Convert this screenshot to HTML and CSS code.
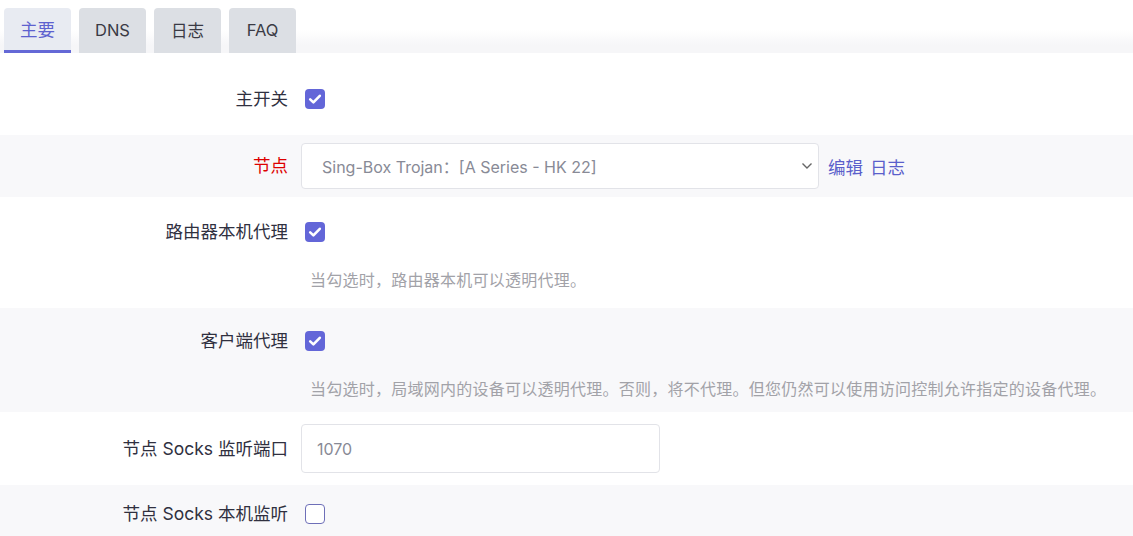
FILE: index.html
```html
<!DOCTYPE html>
<html lang="zh-CN">
<head>
  <meta charset="UTF-8">
  <title>PassWall</title>
  <link rel="stylesheet" href="styles.css">
</head>
<body>
  <ul class="tabs">
    <li class="tab active">主要</li>
    <li class="tab">DNS</li>
    <li class="tab">日志</li>
    <li class="tab">FAQ</li>
  </ul>

  <div class="section">
    <!-- 主开关 -->
    <div class="row row-main">
      <label class="row-title">主开关</label>
      <div class="row-field">
        <span class="cbox checked"></span>
      </div>
    </div>

    <div class="row row-node alt">
      <label class="row-title red">节点</label>
      <div class="row-field inline">
        <div class="select">
          <span>Sing-Box Trojan：[A Series - HK 22]</span>
          <svg class="caret" width="12" height="8" viewBox="0 0 12 8"><path d="M1.5 1.5 6 6l4.5-4.5" fill="none" stroke="#666" stroke-width="1.4"/></svg>
        </div>
        <a class="link" href="#">编辑</a>
        <a class="link" href="#">日志</a>
      </div>
    </div>

    <div class="row row-desc">
      <label class="row-title">路由器本机代理</label>
      <div class="row-field">
        <span class="cbox checked"></span>
        <div class="desc">当勾选时，路由器本机可以透明代理。</div>
      </div>
    </div>

    <div class="row row-desc2 alt">
      <label class="row-title">客户端代理</label>
      <div class="row-field">
        <span class="cbox checked"></span>
        <div class="desc">当勾选时，局域网内的设备可以透明代理。否则，将不代理。但您仍然可以使用访问控制允许指定的设备代理。</div>
      </div>
    </div>

    <div class="row row-port">
      <label class="row-title">节点 Socks 监听端口</label>
      <div class="row-field">
        <div class="text-input">1070</div>
      </div>
    </div>

    <div class="row row-last alt">
      <label class="row-title">节点 Socks 本机监听</label>
      <div class="row-field">
        <span class="cbox"></span>
      </div>
    </div>
  </div>
</body>
</html>
```

FILE: styles.css
```css
html, body {
  margin: 0; padding: 0;
  background: #fff;
  font-family: 'Inter', 'Noto Sans CJK SC', sans-serif;
  color: #30303f;
  overflow: hidden;
}
.tabs {
  list-style: none;
  margin: 0;
  padding: 8px 0 0 4px;
  display: flex;
  gap: 8px;
  height: 45px;
  background: linear-gradient(to bottom, #fff 0, #fff 30px, #f6f6f8 45px);
}
.tab {
  width: 67px;
  height: 45px;
  box-sizing: border-box;
  display: flex;
  align-items: center;
  justify-content: center;
  background: #dcdfe4;
  border-radius: 4px 4px 0 0;
  font-size: 16.5px;
  color: #3a3a44;
  padding-bottom: 2px;
}
.tab.active {
  background: #e8ebf2;
  color: #5d61cf;
  border-bottom: 3px solid #6468d6;
  font-size: 17.5px;
}
.section {
  display: flex;
  flex-direction: column;
  padding-top: 2px;
}
.row {
  display: flex;
  align-items: flex-start;
  box-sizing: border-box;
}
.row.alt { background: #f8f8fa; }
.row-title {
  width: 288px;
  flex: none;
  text-align: right;
  font-size: 17.5px;
  line-height: 24px;
  color: #30303f;
}
.row-title.red { color: #d00; }
.row-field {
  margin-left: 17px;
  display: flex;
  flex-direction: column;
}
.row-field.inline {
  flex-direction: row;
  align-items: center;
  margin-left: 13px;
}
.cbox {
  width: 20px; height: 20px;
  box-sizing: border-box;
  border: 1.5px solid #6e6fb8;
  border-radius: 4px;
  background: #fff;
  display: block;
  margin-top: 2px;
}
.cbox.checked {
  border: none;
  background: #6366d8 url("data:image/svg+xml,%3Csvg xmlns='http://www.w3.org/2000/svg' width='20' height='20' viewBox='0 0 20 20'%3E%3Cpath d='M5.2 10.4 8.4 13.4 14.8 6.8' fill='none' stroke='%23fff' stroke-width='2.6' stroke-linecap='round' stroke-linejoin='round'/%3E%3C/svg%3E") no-repeat center;
}
.desc {
  font-size: 16px;
  letter-spacing: 0.25px;
  color: #a2a2a8;
  margin-top: 25px;
  margin-left: 5px;
  white-space: nowrap;
}
.row-main { height: 80px; padding-top: 32px; }
.row-node { height: 62px; align-items: center; }
.row-desc { height: 111px; padding-top: 23px; }
.row-desc2 { height: 104px; padding-top: 21px; }
.row-port { height: 73px; align-items: center; }
.row-last { height: 60px; padding-top: 17px; }
.select {
  width: 518px;
  height: 46px;
  box-sizing: border-box;
  border: 1px solid #e2e3e8;
  border-radius: 4px;
  background: #fff;
  display: flex;
  align-items: center;
  justify-content: space-between;
  padding: 0 5px 0 20px;
  font-size: 16px;
  color: #888a96;
}
.link {
  color: #5b5fcb;
  text-decoration: none;
  font-size: 17.5px;
  margin-left: 9px;
}
.link + .link { margin-left: 7px; }
.text-input {
  width: 359px;
  height: 49px;
  box-sizing: border-box;
  border: 1px solid #e2e3e8;
  border-radius: 4px;
  background: #fff;
  margin-left: -4px;
  padding: 0 15px;
  display: flex;
  align-items: center;
  font-size: 16px;
  color: #888a96;
}
```
